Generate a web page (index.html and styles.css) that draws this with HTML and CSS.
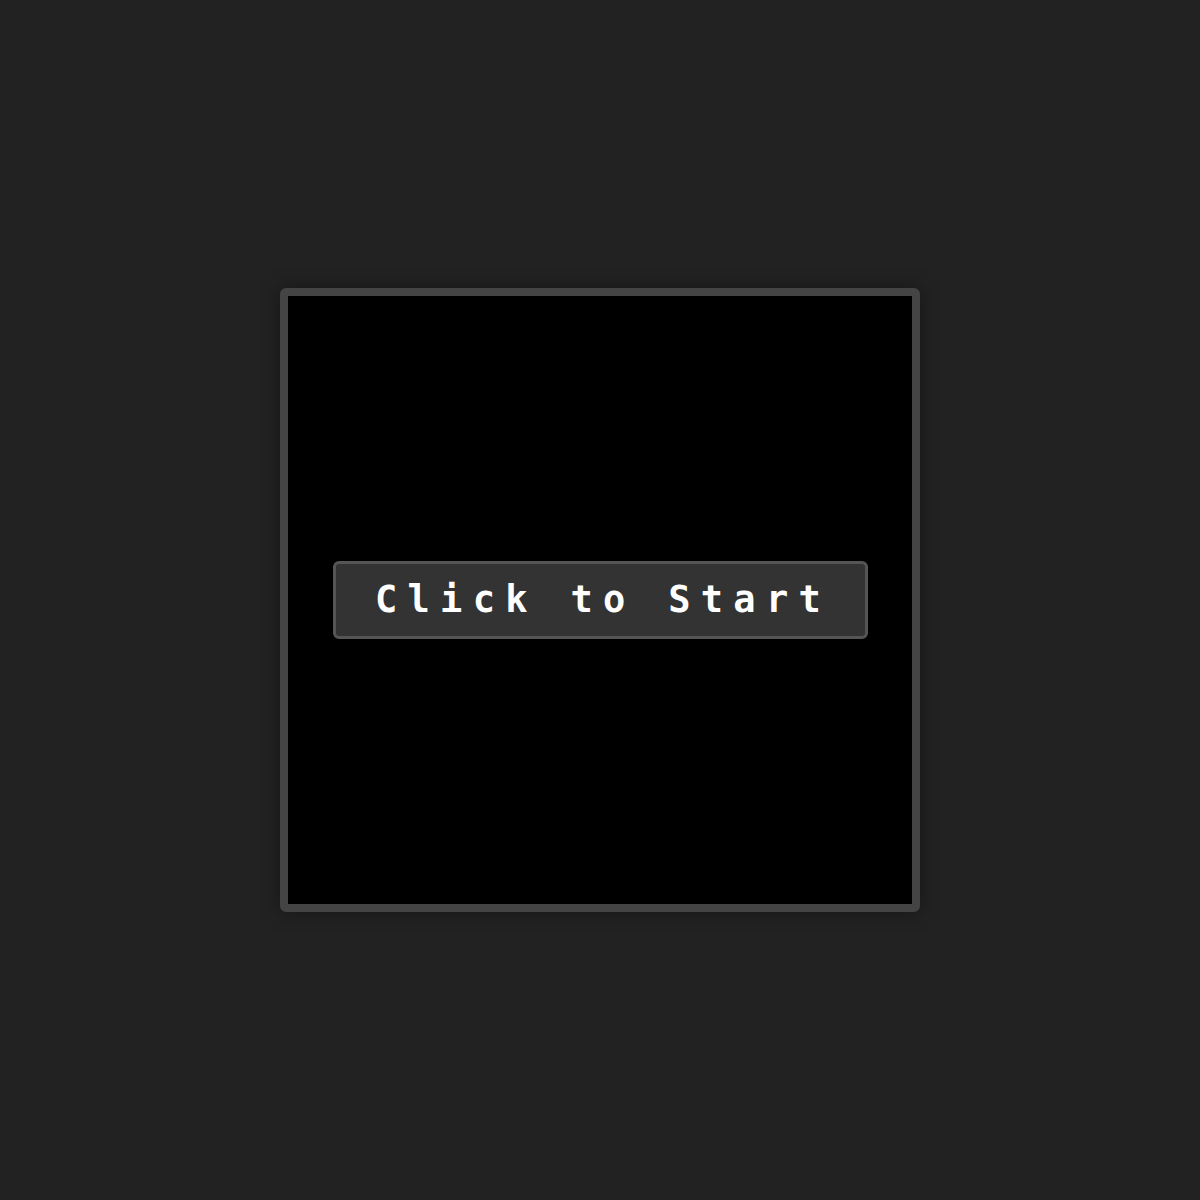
FILE: index.html
```html
<!DOCTYPE html>
<html lang="en-US">

<head>
    <meta charset="utf-8">
    <title>Game</title>
    <link rel="stylesheet" href="styles.css">
</head>

<body>
    <main class="stage">
        <div class="screen">
            <button type="button" class="start">Click to Start</button>
        </div>
    </main>
</body>

</html>
```

FILE: styles.css
```css
html, body {
    margin: 0;
    height: 100%;
    background: #222;
}

.stage {
    display: flex;
    align-items: center;
    justify-content: center;
    height: 100%;
}

.screen {
    display: flex;
    align-items: center;
    justify-content: center;
    width: 624px;
    height: 608px;
    background: #000;
    border: 8px solid #444;
    border-radius: 6px;
    box-shadow: 0 0 20px rgba(0, 0, 0, 0.35);
}

.start {
    background: #333;
    color: #fff;
    border: 3px solid #555;
    border-radius: 6px;
    font-family: "DejaVu Sans Mono", "Liberation Mono", monospace;
    font-weight: 700;
    font-size: 37px;
    line-height: 32px;
    letter-spacing: 10.3px;
    padding: 20px 0 20px 6px;
    width: 535px;
    height: 78px;
    cursor: pointer;
}
```
